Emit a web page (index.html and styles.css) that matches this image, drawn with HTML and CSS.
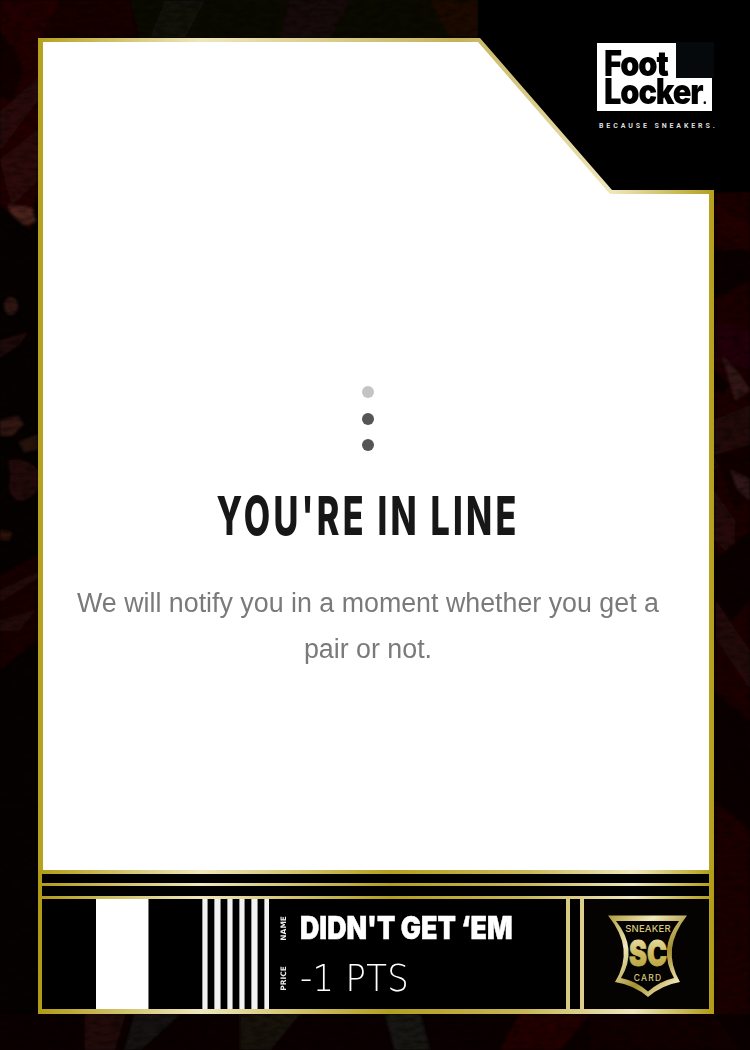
FILE: index.html
```html
<!DOCTYPE html>
<html lang="en">
<head>
<meta charset="utf-8">
<title>Didn't Get 'Em</title>
<link rel="stylesheet" href="styles.css">
</head>
<body>
<svg class="backdrop" viewBox="0 0 750 1050" aria-hidden="true">
  <defs>
    <filter id="soft"><feGaussianBlur stdDeviation="1.6"/></filter>
    <filter id="grain" x="0" y="0" width="100%" height="100%">
      <feTurbulence type="fractalNoise" baseFrequency="0.09 0.22" numOctaves="3" seed="7"/>
      <feColorMatrix values="0 0 0 0 0  0 0 0 0 0  0 0 0 0 0  0 0 0 1.6 -0.62"/>
    </filter>
  </defs>
  <rect width="750" height="1050" fill="#060202"/>
  <g filter="url(#soft)" opacity=".8">
    <rect x="0" y="0" width="480" height="38" fill="#140605"/>
    <polygon points="0,0 62,0 40,40 38,190 30,230 0,205" fill="#2b0604"/>
    <polygon points="60,0 130,0 135,38 40,38" fill="#1c0504"/>
    <polygon points="130,0 480,0 480,38 140,38" fill="#0d0806"/>
    <polygon points="165,0 205,0 185,38 150,38" fill="#171410"/>
    <polygon points="290,0 350,0 330,38 280,38" fill="#1f0807"/>
    <polygon points="430,0 478,0 478,38 450,38" fill="#240d06"/>
    <polygon points="0,30 14,48 24,72 12,106 0,96" fill="#150202"/>
    <polygon points="0,112 38,78 38,100 0,150" fill="#330e0b"/>
    <polygon points="0,160 38,130 38,180 12,205" fill="#35100b"/>
    <polygon points="8,205 32,208 36,222 24,225 12,215" fill="#5c2a22"/>
    <ellipse cx="11" cy="306" rx="7" ry="9" fill="#3a1a16"/>
    <polygon points="0,340 28,332 20,345 0,358" fill="#260807"/>
    <polygon points="0,420 18,416 24,424 12,436 0,436" fill="#3d1a12"/>
    <polygon points="18,442 38,434 38,450 24,452" fill="#2d120d"/>
    <path d="M8 460 Q26 456 38 470 L38 490 Q26 505 16 500 Q6 492 10 478Z" fill="#2a0709"/>
    <polygon points="0,530 12,532 10,540 0,540" fill="#3b1309"/>
    <polygon points="0,575 38,555 38,640 0,670" fill="#1f0405"/>
    <polygon points="0,590 38,572 38,578 0,602" fill="#2c0a08"/>
    <polygon points="0,620 36,610 20,630 0,632" fill="#2b0808"/>
    <polygon points="714,192 750,192 750,1050 714,1050" fill="#210405"/>
    <polygon points="714,205 750,225 750,250 714,230" fill="#2b0606"/>
    <polygon points="714,250 750,250 750,280 714,300" fill="#0c0102"/>
    <polygon points="714,320 750,330 750,370 714,360" fill="#2b0607"/>
    <polygon points="722,355 740,375 750,390 735,400" fill="#3d1a1a"/>
    <polygon points="714,370 730,385 722,395 714,385" fill="#0a0202"/>
    <polygon points="714,420 750,405 750,445 714,470" fill="#2b0a09"/>
    <polygon points="714,455 750,445 750,495 735,510" fill="#120304"/>
    <polygon points="730,470 750,480 750,500 738,490" fill="#3a1c1a"/>
    <polygon points="714,490 735,520 735,560 714,540" fill="#2e0908"/>
    <polygon points="714,560 750,530 750,600 714,640" fill="#0f0203"/>
    <polygon points="716,600 750,650 750,690 716,640" fill="#2b0707"/>
    <polygon points="714,690 750,720 750,830 714,800" fill="#100204"/>
    <polygon points="0,1014 750,1014 750,1050 0,1050" fill="#0b0505"/>
    <polygon points="85,1014 125,1014 115,1050 85,1050" fill="#2a0f0b"/>
    <polygon points="135,1014 180,1014 140,1050 125,1050" fill="#1a1412"/>
    <polygon points="240,1014 300,1014 270,1050 240,1050" fill="#1a1210"/>
    <polygon points="385,1014 420,1014 430,1050 395,1050" fill="#1d1a18"/>
    <polygon points="520,1014 590,1014 560,1050 500,1050" fill="#2c0603"/>
    <polygon points="590,1014 714,1014 740,1050 590,1050" fill="#150304"/>
  </g>
  <rect width="750" height="1050" filter="url(#grain)" opacity=".55"/>
  <rect x="478" y="0" width="272" height="192" fill="#000"/>
</svg>

<main class="card">
  <section class="panel">
    <div class="screen">
      <div class="dots">
        <span class="dot dot-faint"></span>
        <span class="dot"></span>
        <span class="dot"></span>
      </div>
      <h1 class="title">YOU'RE IN LINE</h1>
      <p class="message">We will notify you in a moment whether you get a pair or not.</p>
    </div>
  </section>

  <section class="lower">
    <div class="rule rule-a"></div>
    <div class="rule rule-b"></div>
    <div class="row">
      <div class="plate">
        <div class="bars">
          <span class="bar-gap-a"></span>
          <span class="bar-white"></span>
          <span class="bar-gap-b"></span>
          <span class="bar-stripes"></span>
        </div>
        <div class="info">
          <div class="info-row">
            <span class="tag">NAME</span>
            <span class="name">DIDN'T GET ‘EM</span>
          </div>
          <div class="info-row">
            <span class="tag">PRICE</span>
            <span class="price">-1 PTS</span>
          </div>
        </div>
      </div>
      <div class="spacer"></div>
      <div class="badge">
        <svg class="badge-art" viewBox="584 899 125 110" role="img" aria-label="Sneaker SC Card">
          <defs>
            <linearGradient id="badgeGold" x1="0" y1="0" x2="1" y2="1">
              <stop offset="0" stop-color="#b09b3c"/>
              <stop offset=".3" stop-color="#f1e9b8"/>
              <stop offset=".6" stop-color="#a48f2e"/>
              <stop offset=".85" stop-color="#efe6b4"/>
              <stop offset="1" stop-color="#c2ad4c"/>
            </linearGradient>
            <linearGradient id="scGold" x1="0" y1="0" x2="0" y2="1">
              <stop offset="0" stop-color="#f2ebc0"/>
              <stop offset=".55" stop-color="#cdb95c"/>
              <stop offset="1" stop-color="#b29c36"/>
            </linearGradient>
          </defs>
          <path class="shield-gold" d="M608 915.500H687Q660.500 949 680 982Q662 985 648 997Q634 985 615 982Q635.500 949 608 915.500Z"/>
          <path class="shield-black" d="M616 921H679Q657.500 949 674 978Q660 981 648 991.500Q636 981 621 978Q638.500 949 616 921Z"/>
          <text class="badge-small" x="648" y="931.500">SNEAKER</text>
          <text class="badge-sc" x="648" y="965.500" textLength="38" lengthAdjust="spacingAndGlyphs">SC</text>
          <text class="badge-card" x="648" y="981">CARD</text>
        </svg>
      </div>
    </div>
  </section>
</main>

<aside class="brand">
  <div class="logo">
    <span class="logo-word">Foot</span>
    <span class="logo-word">Locker<span class="logo-stop">.</span></span>
    <span class="logo-notch"></span>
  </div>
  <p class="tagline">BECAUSE SNEAKERS.</p>
</aside>
</body>
</html>
```

FILE: styles.css
```css
* {
  box-sizing: border-box;
}

html,
body {
  margin: 0;
  padding: 0;
}

body {
  position: relative;
  width: 750px;
  height: 1050px;
  overflow: hidden;
  background: #060202;
  font-family: "Liberation Sans", Arial, sans-serif;
}

.backdrop {
  position: absolute;
  inset: 0;
  width: 750px;
  height: 1050px;
  display: block;
}

.card {
  position: relative;
  width: 676px;
  height: 976px;
  margin: 38px 0 0 38px;
  display: flex;
  flex-direction: column;
}

.panel {
  height: 832px;
  padding: 4px 5px 0 5px;
  background: linear-gradient(90deg, #b5a11f 0%, #efe6bd 24%, #c4b25a 62%, #efe6bd 85%, #b3a01c 100%);
  clip-path: polygon(0 0, 442px 0, 574px 152px, 676px 152px, 676px 832px, 0 832px);
}

.screen {
  height: 828px;
  padding: 344px 16px 0 0;
  background: #fff;
  clip-path: polygon(0 0, 435px 0, 567px 152px, 666px 152px, 666px 828px, 0 828px);
  display: flex;
  flex-direction: column;
  align-items: center;
}

.dots {
  display: flex;
  flex-direction: column;
  gap: 14.500px;
  filter: blur(.3px);
}

.dot {
  width: 12px;
  height: 12px;
  border-radius: 50%;
  background: #555;
}

.dot-faint {
  background: #c4c4c4;
}

.title {
  margin: 34px 0 0;
  font-family: "Inter", sans-serif;
  font-size: 53px;
  line-height: 62px;
  font-weight: 800;
  letter-spacing: 5px;
  color: #171717;
  white-space: nowrap;
  transform: scaleX(.645);
  filter: blur(.3px);
}

.message {
  width: 610px;
  margin: 33px 0 0;
  font-size: 26.800px;
  line-height: 46px;
  text-align: center;
  color: #7a7a7a;
  filter: blur(.35px);
}

.lower {
  height: 144px;
  padding: 4px 5px 5px 4px;
  background: linear-gradient(90deg, #b09b14 0%, #efe6bd 24%, #b39f1e 52%, #c7b657 72%, #efe6bd 88%, #b09b14 100%);
  display: flex;
  flex-direction: column;
  gap: 3px;
}

.rule {
  background: #000;
}

.rule-a {
  height: 9px;
}

.rule-b {
  height: 10px;
}

.row {
  height: 110px;
  display: grid;
  grid-template-columns: 524px 10px 125px;
  column-gap: 4px;
}

.plate {
  background: #000;
  display: flex;
}

.spacer {
  background: #000;
}

.bars {
  display: flex;
}

.bar-gap-a {
  width: 54px;
}

.bar-white {
  width: 52.500px;
  background: #fff;
  border-right: 1px solid #777;
}

.bar-gap-b {
  width: 53px;
}

.bar-stripes {
  width: 67px;
  background: repeating-linear-gradient(90deg, #9a9a9a 0, #9a9a9a 1px, #f2f2f2 1px, #f2f2f2 5.500px, #8a8a8a 5.500px, #8a8a8a 6.300px, #000 6.300px, #000 12.330px);
}

.info {
  padding: 4px 0 0 10px;
  display: flex;
  flex-direction: column;
}

.info-row {
  height: 50px;
  display: flex;
  align-items: center;
  gap: 12px;
}

.tag {
  writing-mode: vertical-rl;
  transform: rotate(180deg);
  width: 9px;
  font-family: "DejaVu Sans", sans-serif;
  font-size: 7.500px;
  line-height: 9px;
  font-weight: 700;
  color: #eee;
  text-align: center;
}

.name {
  font-family: "Inter", sans-serif;
  font-size: 31.500px;
  line-height: 36px;
  font-weight: 900;
  color: #fff;
  white-space: nowrap;
  -webkit-text-stroke: .5px #fff;
  transform: scaleX(.85);
  transform-origin: left center;
}

.price {
  font-family: "DejaVu Sans", sans-serif;
  font-size: 38px;
  line-height: 44px;
  font-weight: 200;
  letter-spacing: .4px;
  color: #fff;
  white-space: nowrap;
  transform: scaleX(.89);
  transform-origin: left center;
}

.badge {
  background: #050202;
}

.badge-art {
  display: block;
  width: 125px;
  height: 110px;
}

.shield-gold {
  fill: url(#badgeGold);
}

.shield-black {
  fill: #050202;
}

.badge-small,
.badge-card {
  font-family: "Inter", sans-serif;
  text-anchor: middle;
  fill: #d8c978;
  font-weight: 500;
}

.badge-small {
  font-size: 9.500px;
  letter-spacing: .2px;
}

.badge-card {
  font-size: 8.500px;
  letter-spacing: 1.200px;
}

.badge-sc {
  font-family: "Inter", sans-serif;
  font-size: 35px;
  font-weight: 900;
  text-anchor: middle;
  fill: url(#scGold);
  stroke: url(#scGold);
  stroke-width: .8px;
}

.brand {
  position: absolute;
  left: 597px;
  top: 43px;
  width: 125px;
}

.logo {
  position: relative;
  width: 115px;
  height: 68px;
  padding: 6px 0 0 7px;
  background: #fff;
  display: flex;
  flex-direction: column;
  filter: blur(.4px);
}

.logo-word {
  font-family: "Inter", sans-serif;
  font-size: 35px;
  line-height: 28px;
  font-weight: 900;
  letter-spacing: -1.300px;
  color: #000;
  white-space: nowrap;
  transform: scaleX(.88);
  transform-origin: left center;
}

.logo-stop {
  font-size: 14px;
  letter-spacing: 0;
}

.logo-notch {
  position: absolute;
  top: -1px;
  right: -2px;
  width: 38px;
  height: 36px;
  background: #05090b;
}

.tagline {
  margin: 11px 0 0 2px;
  font-family: "Roboto", sans-serif;
  font-size: 7px;
  line-height: 9px;
  font-weight: 700;
  letter-spacing: 2.900px;
  color: #ddd;
  white-space: nowrap;
}
```
